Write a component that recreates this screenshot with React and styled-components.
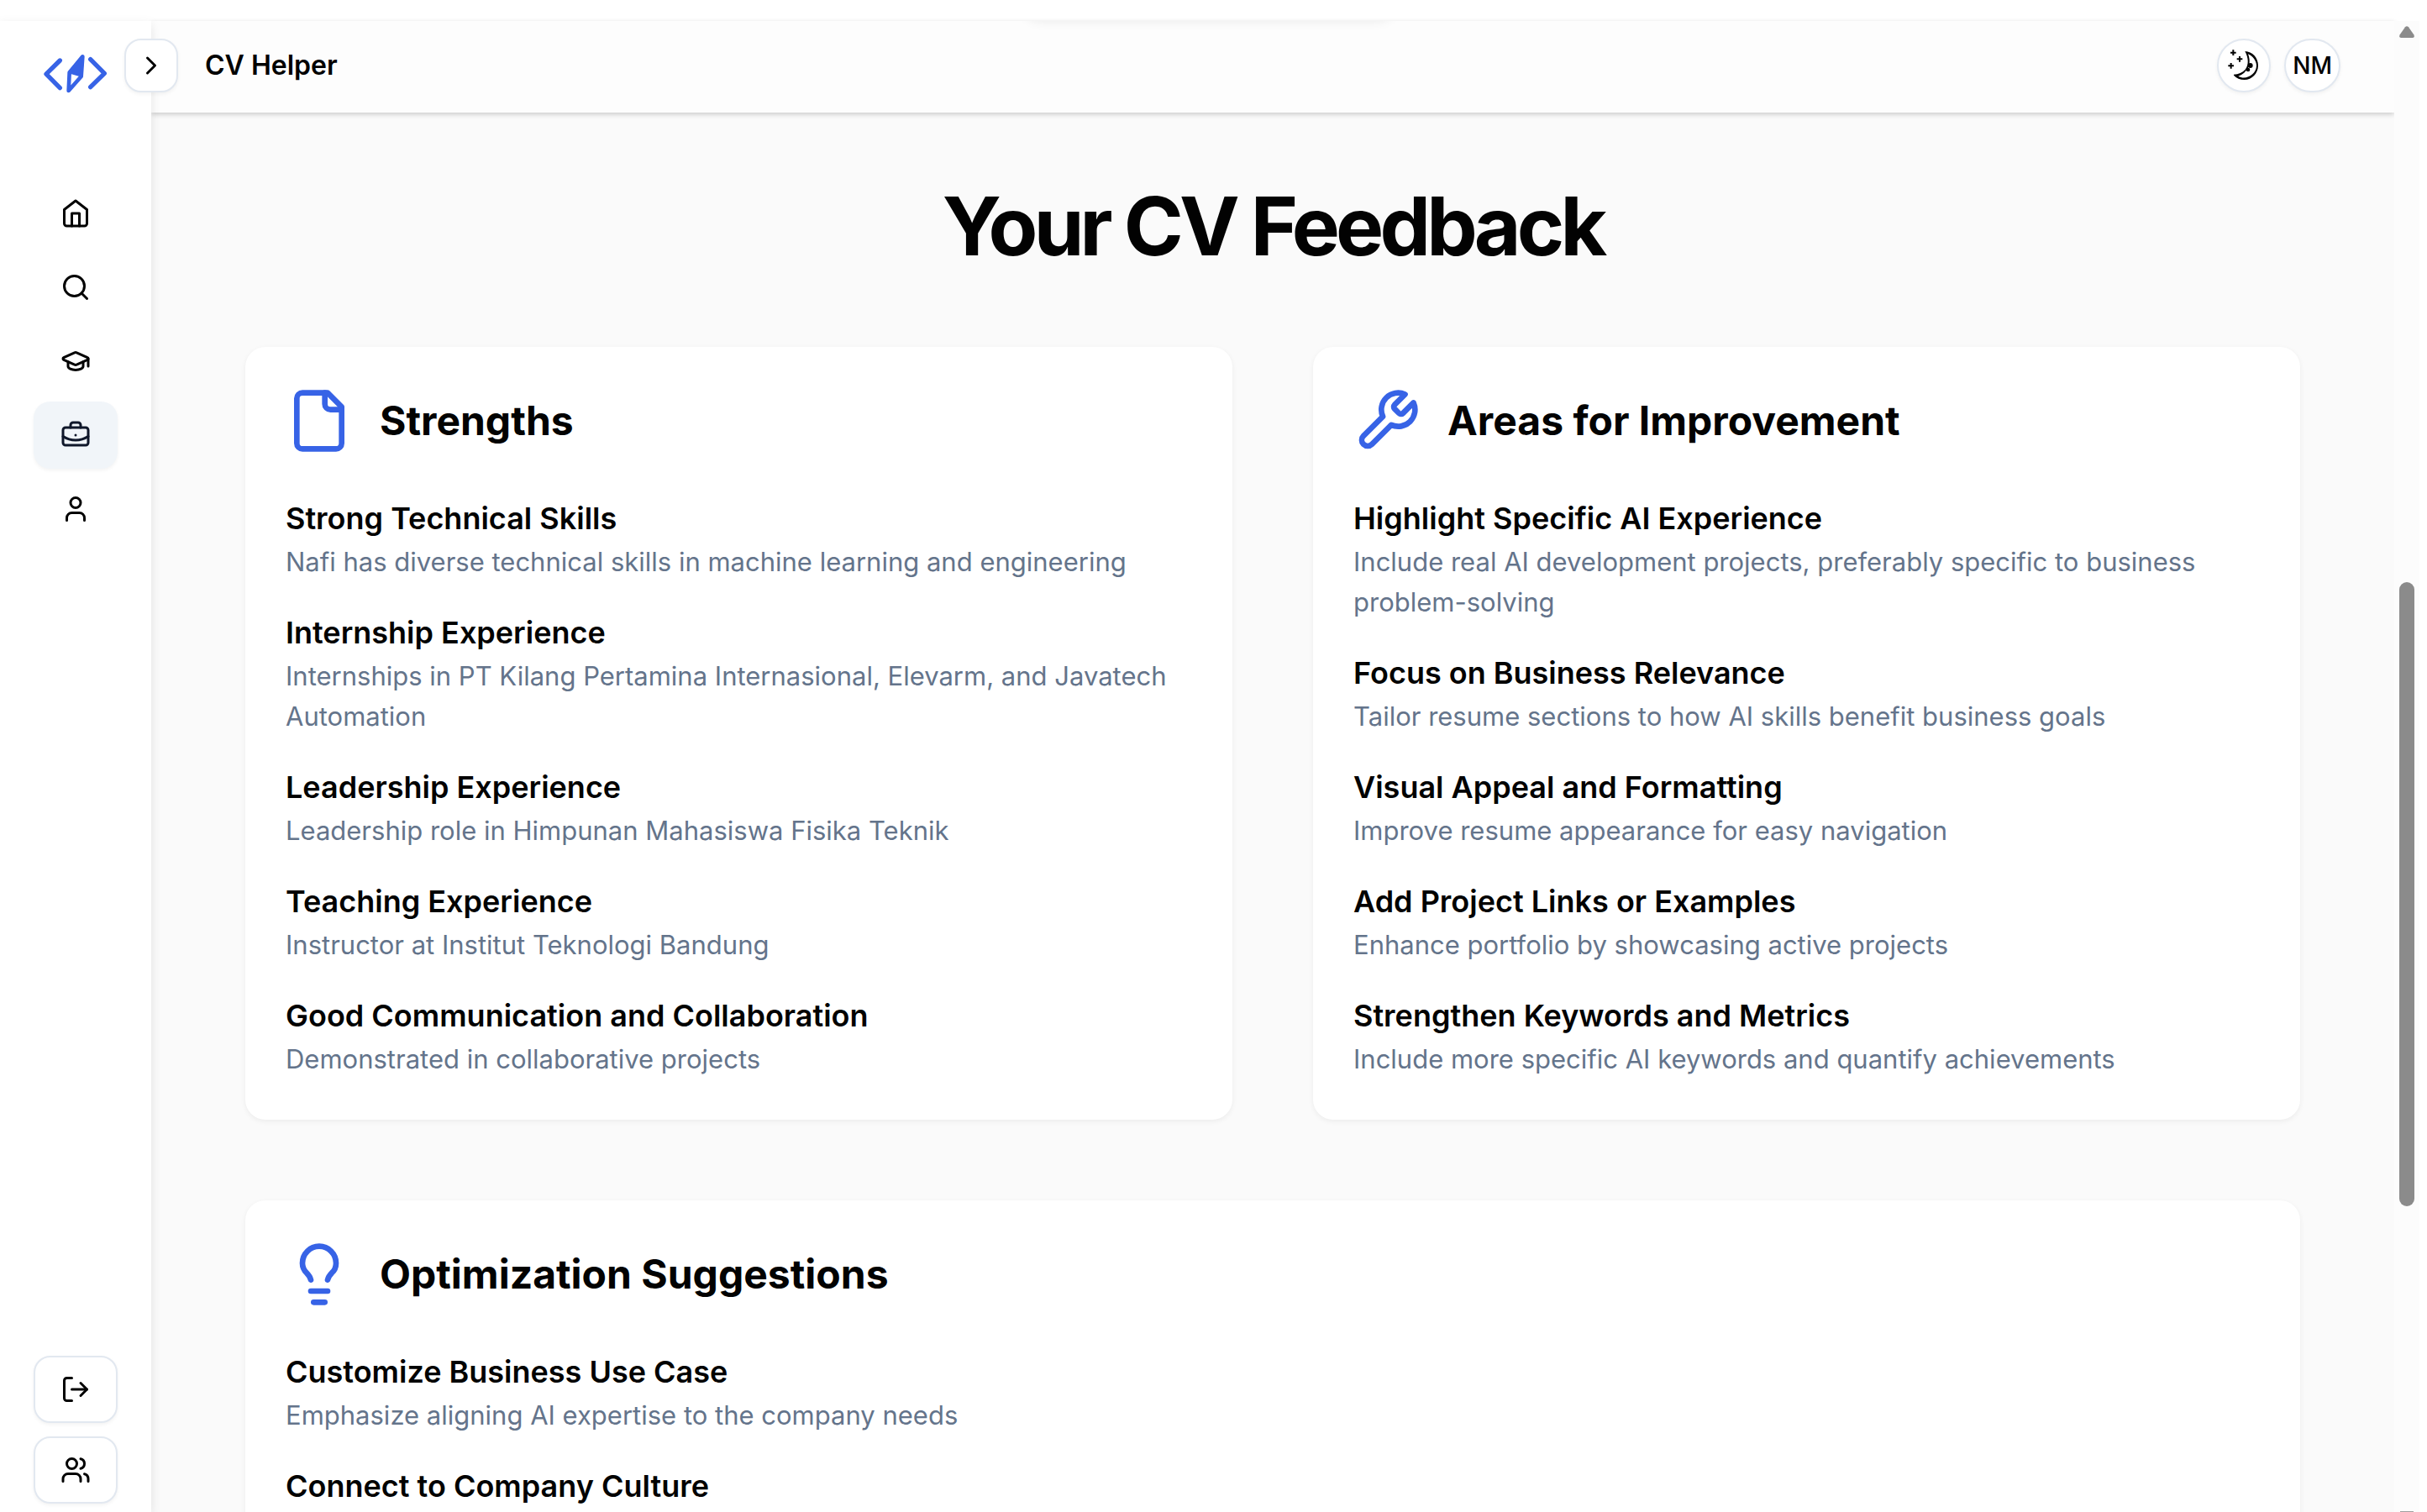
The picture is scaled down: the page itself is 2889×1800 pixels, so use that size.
import React from "react";
import styled, { createGlobalStyle, css } from "styled-components";
import {
  BriefcaseBusiness,
  ChevronRight,
  GraduationCap,
  Lightbulb,
  LogOut,
  Search,
  User,
  Users,
} from "lucide-react";

const GlobalStyle = createGlobalStyle`
  *, *::before, *::after { box-sizing: border-box; }
  body {
    margin: 0;
    background: #ffffff;
    color: #020202;
    font-family: Inter, "Liberation Sans", sans-serif;
  }
  h1, h2, h3, p, ul { margin: 0; padding: 0; }
  ul { list-style: none; }
  button { font-family: inherit; color: inherit; cursor: pointer; }
`;

const Shell = styled.div`
  display: grid;
  grid-template-columns: 180px minmax(0, 1fr) 30px;
  height: 100vh;
  padding: 25px 9px 0 0;
  overflow: hidden;
`;

const Sidebar = styled.aside`
  position: relative;
  z-index: 2;
  display: flex;
  flex-direction: column;
  min-height: 0;
  padding: 35px 40px 10px;
  background: #ffffff;
  box-shadow: 0 4px 12px rgba(0, 0, 0, 0.1);
`;

const LogoLink = styled.a`
  display: block;
  width: 81px;
  height: 54px;
  margin: 0 auto;
`;

const Nav = styled.nav`
  margin-top: 100px;
`;

const Stack = styled.ul`
  display: flex;
  flex-direction: column;
  gap: ${(p) => p.$gap}px;
`;

const SidebarFooter = styled.div`
  margin-top: auto;
`;

const outlined = css`
  border: 2px solid #e2e8f0;
  background: #ffffff;
  box-shadow: 0 2px 4px rgba(0, 0, 0, 0.05);
`;

const NavLink = styled.a`
  display: flex;
  align-items: center;
  justify-content: center;
  height: 80px;
  border-radius: 20px;
  color: ${(p) => (p.$active ? "#0f172a" : "#020202")};
  background: ${(p) => (p.$active ? "#f1f5f9" : "transparent")};
  box-shadow: ${(p) => (p.$active ? "0 2px 4px rgba(0, 0, 0, 0.05)" : "none")};
`;

const SideButton = styled.button`
  ${outlined}
  display: flex;
  align-items: center;
  justify-content: center;
  width: 100%;
  height: 80px;
  padding: 0;
  border-radius: 20px;
`;

const ExpandButton = styled.button`
  ${outlined}
  position: absolute;
  top: 21px;
  right: -32px;
  display: flex;
  align-items: center;
  justify-content: center;
  width: 64px;
  height: 64px;
  padding: 0;
  border-radius: 20px;
`;

const Page = styled.div`
  display: flex;
  flex-direction: column;
  min-width: 0;
  min-height: 0;
  background: #fafafa;
`;

const TopBar = styled.header`
  position: relative;
  z-index: 1;
  display: flex;
  flex: none;
  align-items: center;
  justify-content: space-between;
  height: 109px;
  padding: 0 64px 4px;
  background: #fdfdfd;
  box-shadow: 0 2px 6px rgba(0, 0, 0, 0.2);
`;

const UnderlayShadow = styled.div`
  position: absolute;
  top: 0;
  left: 50%;
  width: 560px;
  height: 16px;
  margin-left: -356px;
  overflow: hidden;

  &::before {
    content: "";
    position: absolute;
    top: -40px;
    left: 60px;
    right: 60px;
    height: 38px;
    border-radius: 20px;
    box-shadow: 0 2px 14px rgba(0, 0, 0, 0.08);
  }
`;

const PageName = styled.p`
  font-size: 32px;
  line-height: 48px;
  font-weight: 600;
`;

const Actions = styled.div`
  display: flex;
  gap: 16px;
`;

const RoundButton = styled.button`
  ${outlined}
  display: flex;
  align-items: center;
  justify-content: center;
  min-width: 64px;
  height: 64px;
  padding: 0 8px;
  border-radius: 32px;
  font-size: 28px;
  line-height: 40px;
  font-weight: 500;
`;

const Content = styled.main`
  display: flex;
  flex-direction: column;
  gap: 96px;
  min-height: 0;
  padding: 87px 112px 0;
  overflow: hidden;
`;

const Title = styled.h1`
  font-size: 96px;
  line-height: 96px;
  font-weight: 700;
  letter-spacing: -0.05em;
  text-align: center;
`;

const CardGrid = styled.div`
  display: grid;
  grid-template-columns: repeat(2, minmax(0, 1fr));
  gap: 96px;
`;

const Card = styled.section`
  grid-column: ${(p) => (p.$wide ? "1 / -1" : "auto")};
  padding: 48px;
  border-radius: 24px;
  background: #ffffff;
  box-shadow: 0 2px 6px rgba(0, 0, 0, 0.06);
`;

const CardHeader = styled.div`
  display: flex;
  align-items: center;
  gap: 32px;
  margin-bottom: 48px;

  svg { color: #3763e6; }
`;

const CardTitle = styled.h2`
  font-size: 48px;
  line-height: 64px;
  font-weight: 700;
`;

const ItemTitle = styled.h3`
  font-size: 36px;
  line-height: 56px;
  font-weight: 600;
`;

const ItemText = styled.p`
  font-size: 31px;
  line-height: 48px;
  color: #64748b;
`;

const ScrollTrack = styled.div`
  position: relative;
  z-index: 2;
  display: flex;
  flex-direction: column;
  align-items: center;
  min-height: 0;
  padding-top: 6px;
  background: #fcfcfc;
  overflow: hidden;
`;

const ScrollThumb = styled.div`
  flex: none;
  width: 18px;
  height: 42%;
  margin-top: 648px;
  border-radius: 9px;
  background: #8b8b8b;
`;

const ScrollEnd = styled.div`
  width: 16px;
  height: 1px;
  margin-top: auto;
  background: #a0a0a0;
`;

const Logo = () => (
  <svg width="81" height="54" viewBox="150 180 243 162" fill="none" stroke="#3763e6" strokeLinecap="round" strokeLinejoin="round">
    <path d="M214 216 165 264.500 214 314M323 212 373 262 323 311" strokeWidth="16" />
    <path d="M295 202 248 259 245 324 290 273Z" strokeWidth="14" />
    <path d="M295 202 249 258 290 270Z" fill="#3763e6" strokeWidth="10" />
  </svg>
);

const LineIcon = ({ size = 36, children }) => (
  <svg width={size} height={size} viewBox="0 0 24 24" fill="none" stroke="currentColor" strokeWidth="2" strokeLinecap="round" strokeLinejoin="round">
    {children}
  </svg>
);

const HomeIcon = ({ size }) => (
  <LineIcon size={size}>
    <path d="m3 9 9-7 9 7v11a2 2 0 0 1-2 2H5a2 2 0 0 1-2-2z" />
    <path d="M9 22V12h6v10" />
  </LineIcon>
);

const FileIcon = ({ size }) => (
  <LineIcon size={size}>
    <path d="M15 2H6a2 2 0 0 0-2 2v16a2 2 0 0 0 2 2h12a2 2 0 0 0 2-2V7Z" />
    <path d="M14 2v4a2 2 0 0 0 2 2h4" />
  </LineIcon>
);

const WrenchIcon = ({ size }) => (
  <LineIcon size={size}>
    <path d="M14.7 6.3a1 1 0 0 0 0 1.4l1.6 1.6a1 1 0 0 0 1.4 0l3.77-3.77a6 6 0 0 1-7.94 7.94l-6.91 6.91a2.12 2.12 0 0 1-3-3l6.91-6.91a6 6 0 0 1 7.94-7.94l-3.76 3.76z" />
  </LineIcon>
);

const MoonIcon = () => (
  <svg width="40" height="40" viewBox="270 174 120 120" fill="currentColor">
    <path d="M334 183C360 184 381 206 381 234C381 262 359 285 332 285C317 285 303 279 294 269L294 266C311 265 325 259 335 248C348 232 347 207 334 183ZM345 193C352 211 352 228 345 242C338 255 326 266 310 272C337 288 375 266 375 234C375 217 361 199 345 193Z" fillRule="evenodd" />
    <circle cx="353" cy="234" r="9" />
    <circle cx="345" cy="249" r="7" />
    <path d="M292 178v20M282 188h20M315 201v20M305 211h20M284 225v20M274 235h20" stroke="currentColor" strokeWidth="6" />
  </svg>
);

const UpArrow = () => (
  <svg width="18" height="14" viewBox="0 0 18 14" fill="#8b8b8b">
    <path d="M7 1.200Q9-.9 11 1.200L17.500 10.500Q18.500 14 16 14H2Q-.5 14 .5 10.500Z" />
  </svg>
);

const navItems = [
  { label: "Home", icon: HomeIcon },
  { label: "Search", icon: Search },
  { label: "Learning", icon: GraduationCap },
  { label: "Career", icon: BriefcaseBusiness, active: true },
  { label: "Profile", icon: User },
];

const sections = [
  {
    title: "Strengths",
    icon: FileIcon,
    items: [
      ["Strong Technical Skills", "Nafi has diverse technical skills in machine learning and engineering"],
      ["Internship Experience", "Internships in PT Kilang Pertamina Internasional, Elevarm, and Javatech Automation"],
      ["Leadership Experience", "Leadership role in Himpunan Mahasiswa Fisika Teknik"],
      ["Teaching Experience", "Instructor at Institut Teknologi Bandung"],
      ["Good Communication and Collaboration", "Demonstrated in collaborative projects"],
    ],
  },
  {
    title: "Areas for Improvement",
    icon: WrenchIcon,
    items: [
      ["Highlight Specific AI Experience", "Include real AI development projects, preferably specific to business problem-solving"],
      ["Focus on Business Relevance", "Tailor resume sections to how AI skills benefit business goals"],
      ["Visual Appeal and Formatting", "Improve resume appearance for easy navigation"],
      ["Add Project Links or Examples", "Enhance portfolio by showcasing active projects"],
      ["Strengthen Keywords and Metrics", "Include more specific AI keywords and quantify achievements"],
    ],
  },
  {
    title: "Optimization Suggestions",
    icon: Lightbulb,
    wide: true,
    items: [
      ["Customize Business Use Case", "Emphasize aligning AI expertise to the company needs"],
      ["Connect to Company Culture"],
    ],
  },
];

function FeedbackCard({ title, icon: Icon, items, wide }) {
  return (
    <Card $wide={wide}>
      <CardHeader>
        <Icon size={80} />
        <CardTitle>{title}</CardTitle>
      </CardHeader>
      <Stack $gap={32}>
        {items.map(([name, text]) => (
          <li key={name}>
            <ItemTitle>{name}</ItemTitle>
            {text && <ItemText>{text}</ItemText>}
          </li>
        ))}
      </Stack>
    </Card>
  );
}

export default function App() {
  return (
    <>
      <GlobalStyle />
      <Shell>
        <Sidebar>
          <LogoLink href="#" aria-label="Start page">
            <Logo />
          </LogoLink>
          <ExpandButton aria-label="Expand sidebar">
            <ChevronRight size={36} />
          </ExpandButton>
          <Nav>
            <Stack $gap={8}>
              {navItems.map(({ label, icon: Icon, active }) => (
                <li key={label}>
                  <NavLink href="#" aria-label={label} $active={active}>
                    <Icon size={36} />
                  </NavLink>
                </li>
              ))}
            </Stack>
          </Nav>
          <SidebarFooter>
            <Stack $gap={16}>
              <li>
                <SideButton aria-label="Log out">
                  <LogOut size={36} />
                </SideButton>
              </li>
              <li>
                <SideButton aria-label="Community">
                  <Users size={36} />
                </SideButton>
              </li>
            </Stack>
          </SidebarFooter>
        </Sidebar>
        <Page>
          <TopBar>
            <UnderlayShadow />
            <PageName>CV Helper</PageName>
            <Actions>
              <RoundButton aria-label="Switch theme">
                <MoonIcon />
              </RoundButton>
              <RoundButton>NM</RoundButton>
            </Actions>
          </TopBar>
          <Content>
            <Title>Your CV Feedback</Title>
            <CardGrid>
              {sections.map((section) => (
                <FeedbackCard key={section.title} {...section} />
              ))}
            </CardGrid>
          </Content>
        </Page>
        <ScrollTrack>
          <UpArrow />
          <ScrollThumb />
          <ScrollEnd />
        </ScrollTrack>
      </Shell>
    </>
  );
}
